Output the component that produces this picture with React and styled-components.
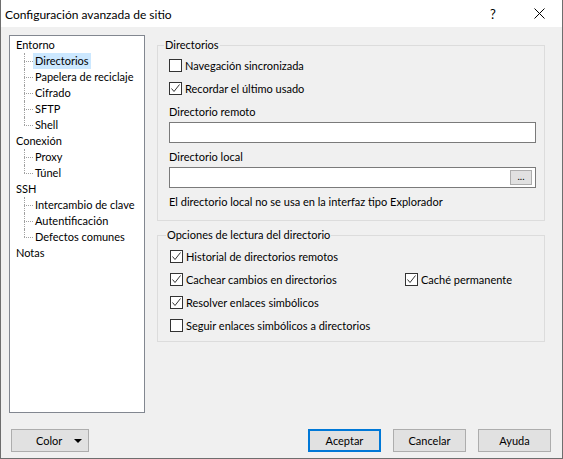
import React from 'react';
import styled, { createGlobalStyle } from 'styled-components';

const GlobalStyle = createGlobalStyle`
  html, body {
    margin: 0;
    padding: 0;
    background: #f0f0f0;
  }
  body {
    font-family: Lato, "Liberation Sans", sans-serif;
    font-size: 11px;
    color: #000;
  }
`;

const tree = [
  { label: 'Entorno', children: ['Directorios', 'Papelera de reciclaje', 'Cifrado', 'SFTP', 'Shell'] },
  { label: 'Conexión', children: ['Proxy', 'Túnel'] },
  { label: 'SSH', children: ['Intercambio de clave', 'Autentificación', 'Defectos comunes'] },
  { label: 'Notas', children: [] },
];

function CheckBox({ checked, label }) {
  return (
    <CheckRow>
      <Box>
        {checked && (
          <svg width="11" height="11" viewBox="0 0 11 11">
            <polyline points="1.5,5.5 4,8.5 9.5,1.5" fill="none" stroke="#333" strokeWidth="1" />
          </svg>
        )}
      </Box>
      <span>{label}</span>
    </CheckRow>
  );
}

export default function App() {
  return (
    <>
      <GlobalStyle />
      <Window>
        <TitleBar>
          <Title>Configuración avanzada de sitio</Title>
          <CaptionButton>?</CaptionButton>
          <CaptionButton>
            <svg width="11" height="11" viewBox="0 0 11 11">
              <path d="M0.5 0.5 L10.5 10.5 M10.5 0.5 L0.5 10.5" stroke="#000" strokeWidth="1" />
            </svg>
          </CaptionButton>
        </TitleBar>

        <Body>
          <Content>
            <Tree>
              {tree.map((node) => (
                <div key={node.label}>
                  <ParentRow>{node.label}</ParentRow>
                  {node.children.map((child, i) => (
                    <ChildRow key={child}>
                      <Connector $last={i === node.children.length - 1} />
                      <ItemText $selected={child === 'Directorios'}>{child}</ItemText>
                    </ChildRow>
                  ))}
                </div>
              ))}
            </Tree>

            <Pages>
              <Group>
                <Legend $offset={-5}>Directorios</Legend>
                <CheckList>
                  <CheckBox label="Navegación sincronizada" />
                  <CheckBox checked label="Recordar el último usado" />
                </CheckList>
                <FieldLabel $top={6}>Directorio remoto</FieldLabel>
                <Input />
                <FieldLabel $top={6}>Directorio local</FieldLabel>
                <Input>
                  <BrowseButton>...</BrowseButton>
                </Input>
                <Note>El directorio local no se usa en la interfaz tipo Explorador</Note>
              </Group>

              <Group $second>
                <Legend $offset={-4}>Opciones de lectura del directorio</Legend>
                <OptionGrid>
                  <CheckBox checked label="Historial de directorios remotos" />
                  <span />
                  <CheckBox checked label="Cachear cambios en directorios" />
                  <CheckBox checked label="Caché permanente" />
                  <CheckBox checked label="Resolver enlaces simbólicos" />
                  <span />
                  <CheckBox label="Seguir enlaces simbólicos a directorios" />
                </OptionGrid>
              </Group>
            </Pages>
          </Content>

          <Footer>
            <Button $width={78}>
              <span>Color</span>
              <Caret />
            </Button>
            <Spacer />
            <Button $default>Aceptar</Button>
            <Button>Cancelar</Button>
            <Button>Ayuda</Button>
          </Footer>
        </Body>
      </Window>
    </>
  );
}

const Window = styled.div`
  width: 563px;
  height: 459px;
  box-sizing: border-box;
  border: 1px solid #6e6e6e;
  border-top: none;
  display: flex;
  flex-direction: column;
  background: #f0f0f0;
`;

const TitleBar = styled.div`
  height: 27px;
  background: #fff;
  display: flex;
  align-items: center;
  padding-left: 4px;
`;

const Title = styled.div`
  flex: 1;
  font-size: 12px;
  padding-top: 1px;
`;

const CaptionButton = styled.div`
  width: 46px;
  height: 27px;
  display: flex;
  align-items: center;
  justify-content: center;
  font-size: 13px;
`;

const Body = styled.div`
  flex: 1;
  display: flex;
  flex-direction: column;
  padding: 8px 11px 0 8px;
`;

const Content = styled.div`
  display: flex;
  gap: 12px;
`;

const Tree = styled.div`
  width: 136px;
  height: 378px;
  box-sizing: border-box;
  background: #fff;
  border: 1px solid #828790;
  padding: 1px 0 0 6px;
`;

const ParentRow = styled.div`
  height: 16px;
  line-height: 16px;
  white-space: nowrap;
`;

const ChildRow = styled.div`
  height: 16px;
  display: flex;
  align-items: center;
  padding-left: 8px;
  white-space: nowrap;
`;

const Connector = styled.span`
  position: relative;
  width: 9px;
  height: 16px;
  flex: none;

  &::before {
    content: '';
    position: absolute;
    left: 0;
    top: 0;
    bottom: ${(p) => (p.$last ? '8px' : '0')};
    border-left: 1px dotted #a0a0a0;
  }

  &::after {
    content: '';
    position: absolute;
    left: 0;
    top: 8px;
    width: 9px;
    border-top: 1px dotted #a0a0a0;
  }
`;

const ItemText = styled.span`
  line-height: 16px;
  padding: 0 2px;
  background: ${(p) => (p.$selected ? '#cce8ff' : 'transparent')};
`;

const Pages = styled.div`
  width: 388px;
  display: flex;
  flex-direction: column;
  padding-top: 2px;
`;

const Group = styled.fieldset`
  margin: ${(p) => (p.$second ? '6px' : '0')} 0 0;
  padding: 0 8px ${(p) => (p.$second ? '6px' : '10px')} ${(p) => (p.$second ? '12px' : '11px')};
  border: 1px solid #dcdcdc;
  min-width: 0;
`;

const Legend = styled.legend`
  padding: 0 1px;
  margin-left: ${(p) => p.$offset}px;
  line-height: 16px;
`;

const CheckList = styled.div`
  display: flex;
  flex-direction: column;
  gap: 3px;
  margin-top: 2px;
`;

const CheckRow = styled.label`
  height: 20px;
  display: flex;
  align-items: center;
  gap: 3px;
  white-space: nowrap;
`;

const Box = styled.span`
  width: 13px;
  height: 13px;
  box-sizing: border-box;
  border: 1px solid #333;
  background: #fff;
  display: flex;
  align-items: center;
  justify-content: center;
  flex: none;
`;

const FieldLabel = styled.div`
  margin-top: ${(p) => p.$top}px;
  line-height: 16px;
`;

const Input = styled.div`
  margin-top: 2px;
  height: 21px;
  box-sizing: border-box;
  background: #fff;
  border: 1px solid #7a7a7a;
  display: flex;
  justify-content: flex-end;
  align-items: center;
  padding-right: 3px;
`;

const BrowseButton = styled.div`
  width: 22px;
  height: 15px;
  box-sizing: border-box;
  background: #e1e1e1;
  border: 1px solid #adadad;
  font-size: 10px;
  line-height: 10px;
  text-align: center;
`;

const Note = styled.div`
  margin-top: 6px;
  line-height: 16px;
`;

const OptionGrid = styled.div`
  display: grid;
  grid-template-columns: 235px 1fr;
  row-gap: 3px;
  margin-top: 3px;
`;

const Footer = styled.div`
  display: flex;
  gap: 12px;
  margin-top: 16px;
  padding-left: 2px;
`;

const Spacer = styled.div`
  flex: 1;
`;

const Button = styled.div`
  width: ${(p) => p.$width || 73}px;
  height: 23px;
  box-sizing: border-box;
  background: #e1e1e1;
  border: ${(p) => (p.$default ? '2px solid #0078d7' : '1px solid #adadad')};
  display: flex;
  align-items: center;
  justify-content: ${(p) => (p.$width ? 'space-between' : 'center')};
  padding: ${(p) => (p.$width ? '0 6px 0 24px' : '0')};
`;

const Caret = styled.span`
  width: 0;
  height: 0;
  border-left: 4px solid transparent;
  border-right: 4px solid transparent;
  border-top: 4px solid #000;
`;
